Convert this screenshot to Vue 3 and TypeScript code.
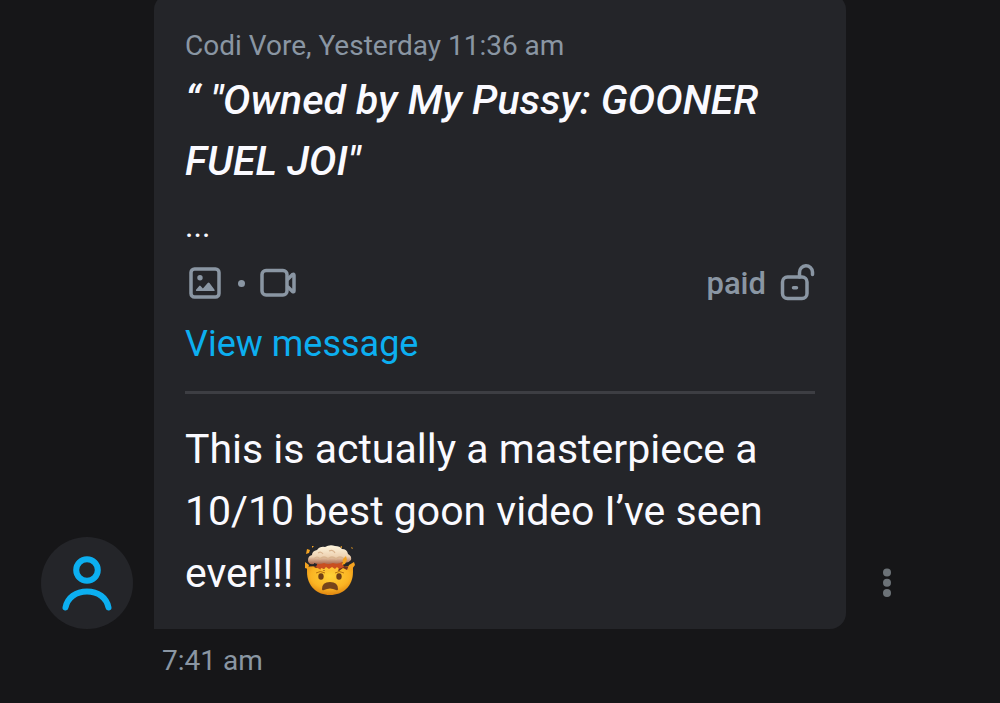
<script setup lang="ts">
interface QuotedMessage {
  author: string
  sentAt: string
  title: string
  status: string
}

const quoted: QuotedMessage = {
  author: 'Codi Vore',
  sentAt: 'Yesterday 11:36 am',
  title: '“ "Owned by My Pussy: GOONER FUEL JOI"',
  status: 'paid',
}

const reply = 'This is actually a masterpiece a 10/10 best goon video I’ve seen ever!!!'
const repliedAt = '7:41 am'
</script>

<template>
  <main class="chat">
    <article class="message">
      <a class="avatar" href="#profile" aria-label="Profile">
        <svg viewBox="0 0 92 92" aria-hidden="true">
          <circle cx="46" cy="33" r="10.800" />
          <path d="M24.500 70.500C26.500 60.500 35 54.500 46 54.500S65.500 60.500 67.500 70.500" />
        </svg>
      </a>

      <div class="bubble">
        <section class="quote">
          <p class="meta">{{ quoted.author }}, {{ quoted.sentAt }}</p>
          <p class="title">{{ quoted.title }}</p>
          <p class="more">...</p>
          <div class="media">
            <div class="kinds">
              <svg class="icon" viewBox="0 0 40 40" role="img" aria-label="Photo">
                <rect x="6" y="6" width="28" height="28" rx="3.500" />
                <circle class="solid" cx="15" cy="14.700" r="2.700" />
                <path class="solid" d="M11.200 28q-.6-.8 0-1.500l3-3.500q.7-.8 1.400 0l2.300 2.600 4.800-5.500q.9-1 1.800 0l4.700 6.200q.8 1 .3 1.700z" />
              </svg>
              <span class="dot"></span>
              <svg class="icon" viewBox="0 0 40 40" role="img" aria-label="Video">
                <rect x="4" y="7.500" width="25" height="24.500" rx="4" />
                <path d="M30 16 34.500 11.500q1.500-1 1.500.8v15.400q0 1.800-1.500.8L30 24" />
              </svg>
            </div>
            <div class="status">
              <span>{{ quoted.status }}</span>
              <svg class="icon" viewBox="0 0 40 40" role="img" aria-label="Unlocked">
                <rect x="7.500" y="14" width="24.500" height="21.500" rx="5" />
                <path d="M24.500 14v-4.500a6.500 6.500 0 0 1 13-.5v2.500M18.500 24.700h3" />
              </svg>
            </div>
          </div>
          <a class="view" href="#message">View message</a>
        </section>

        <hr class="divider" />

        <p class="reply">
          {{ reply }}
          <svg class="emoji" viewBox="0 0 52 52" role="img" aria-label="Exploding head">
            <defs>
              <radialGradient id="skin" cx=".5" cy=".35" r=".7">
                <stop offset="0" stop-color="#ffd338" />
                <stop offset=".6" stop-color="#fbb423" />
                <stop offset="1" stop-color="#d97b0c" />
              </radialGradient>
              <linearGradient id="cloud" x1="0" y1="0" x2="0" y2="1">
                <stop offset="0" stop-color="#fff7df" />
                <stop offset=".6" stop-color="#edd1b1" />
                <stop offset="1" stop-color="#a9664b" />
              </linearGradient>
            </defs>
            <path fill="url(#skin)" d="M3 22c7-2 39-2 46 0v5c0 14-10 23-23 23S3 41 3 27z" />
            <path fill="#6c3020" d="M4 22q22-4 44 0l-5 3-4-2-4 3-4-3-4 2-4-2-3 3-4-4-4 1-4-2z" />
            <path fill="#c94f20" d="M14 17h24l2 5-5 2-3 2-3-3-4 2-4-2-4 2-5-3z" />
            <path fill="#ffc334" d="m17 23 3 1 2-2 3 2 3-2 3 2 2-2 2 2-3 3-4-2-4 2-4-2-4 1z" />
            <path fill="url(#cloud)" d="M10 19q-6 1-6-4 0-4 4-5 0-4 5-5 3-4 8-3 5-3 10-1 5 0 7 3 5 0 6 5 4 2 3 6-3 4-9 2-4 3-9 1-5 2-9 0-5 2-10 0z" />
            <path fill="none" stroke="#d9b48f" stroke-width="1.200" d="M10 14q3-4 6 0 4-4 8 0 4-4 8 0 4-4 8 0M14 8q3-2 5 1M25 6q4-2 6 2" />
            <path fill="#f4a321" d="m1 17 4 3-1 4-3-1zm38-3 3-3 1 4-2 4-3 1zm6 6 5-3 1 3-3 4-5 1zM3 4l3 1-1 3-3 1zM8 1l2 0-2 2zM36 2l2-1 0 2zM47 2l2 1-1 1z" />
            <ellipse cx="17" cy="31.500" rx="2.700" ry="3.200" fill="#704016" />
            <ellipse cx="35" cy="31.500" rx="2.700" ry="3.200" fill="#704016" />
            <path fill="none" stroke="#b97310" stroke-width="1" d="M12 28q4-3 9 0M31 28q4-3 9 0" />
            <path fill="#75441b" d="M18 44q0-7 8-7 8 0 8 7 0 2-2 1-6-3-12 0-2 1-2-1z" />
          </svg>
        </p>
      </div>

      <button class="menu" type="button" aria-label="Message options">
        <svg viewBox="0 0 12 32" aria-hidden="true">
          <circle cx="6" cy="5.500" r="4" />
          <circle cx="6" cy="15.800" r="4" />
          <circle cx="6" cy="26" r="4" />
        </svg>
      </button>

      <time class="time">{{ repliedAt }}</time>
    </article>
  </main>
</template>

<style>
body {
  margin: 0;
  background: #161618;
}
</style>

<style scoped>
.chat {
  min-height: 100vh;
  box-sizing: border-box;
  overflow: hidden;
  background: #161618;
  color: #fafaff;
  font-family: Roboto, "Liberation Sans", sans-serif;
}

p {
  margin: 0;
}

svg {
  display: block;
}

.message {
  display: grid;
  grid-template-columns: 92px minmax(0, 1fr) 32px;
  column-gap: 21px;
  align-items: end;
  margin-top: -6px;
  padding: 0 97px 0 41px;
}

.avatar {
  width: 92px;
  height: 92px;
  border-radius: 50%;
  background: #242529;
}

.avatar svg {
  fill: none;
  stroke: #0caff0;
  stroke-width: 6;
  stroke-linecap: round;
}

.bubble {
  margin-right: 4px;
  padding: 32px 31px 25px;
  border-radius: 16px 16px 16px 0;
  background: #242529;
}

.meta,
.time {
  color: #8a96a3;
  font-size: 28px;
  line-height: 40px;
}

.title {
  margin-top: 4px;
  font-size: 41px;
  font-style: italic;
  font-weight: 500;
  line-height: 61px;
}

.more {
  margin-top: 8px;
  font-size: 32px;
  line-height: 52px;
}

.media,
.kinds,
.status {
  display: flex;
  align-items: center;
}

.media {
  justify-content: space-between;
  height: 62px;
  color: #8a96a3;
}

.kinds {
  gap: 13px;
}

.status {
  gap: 9px;
  font-size: 31px;
  font-weight: 500;
}

.icon {
  width: 40px;
  height: 40px;
  fill: none;
  stroke: currentColor;
  stroke-width: 3.5;
  stroke-linecap: round;
  stroke-linejoin: round;
}

.icon .solid {
  fill: currentColor;
  stroke: none;
}

.dot {
  width: 7px;
  height: 7px;
  border-radius: 50%;
  background: currentColor;
}

.view {
  display: block;
  width: fit-content;
  color: #0caff0;
  font-size: 36px;
  line-height: 60px;
  text-decoration: none;
}

.divider {
  height: 3px;
  margin: 17px 0 24px;
  border: 0;
  background: #3d3e43;
}

.reply {
  font-size: 41px;
  line-height: 62px;
}

.emoji {
  display: inline-block;
  width: 52px;
  height: 52px;
  vertical-align: -10px;
}

.menu {
  display: flex;
  justify-content: center;
  width: 32px;
  margin-bottom: 30px;
  padding: 0;
  border: 0;
  background: none;
  cursor: pointer;
}

.menu svg {
  width: 12px;
  height: 32px;
  fill: #6c7277;
}

.time {
  grid-column: 2;
  margin: 12px 0 0 8px;
}
</style>
